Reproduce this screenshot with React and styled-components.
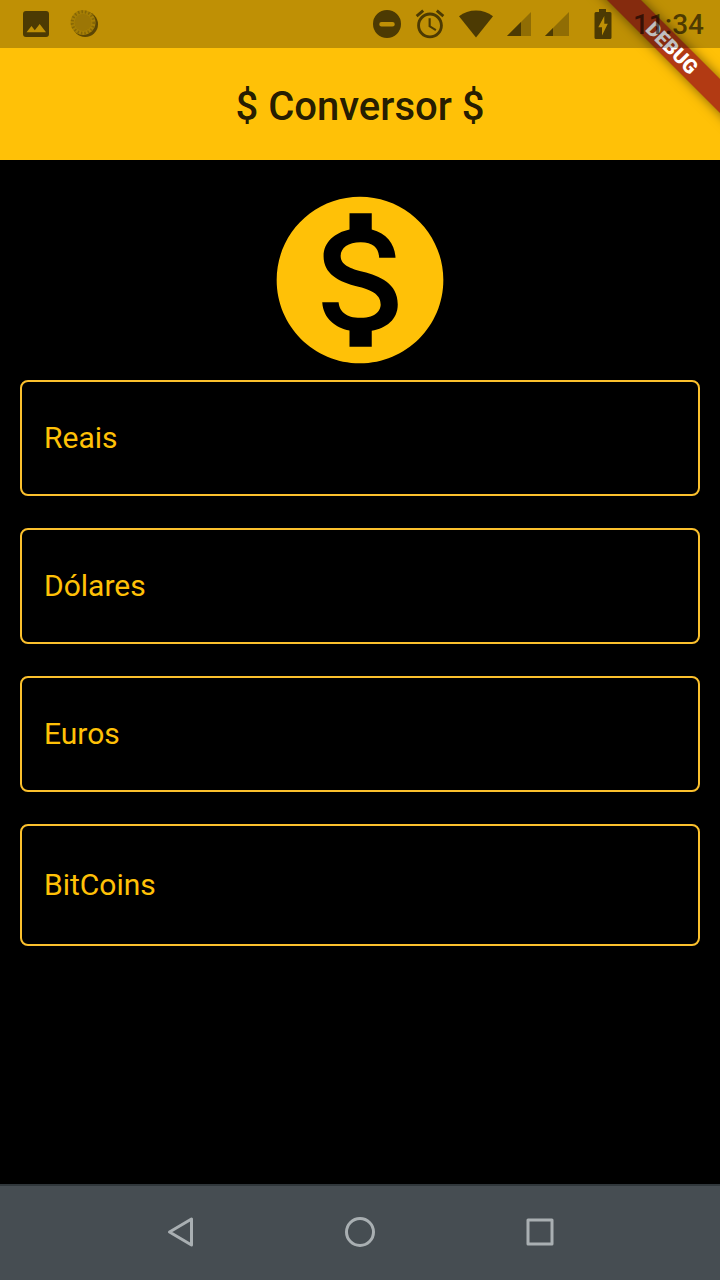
import React from "react";
import styled, { createGlobalStyle } from "styled-components";

const amber = "#ffc107";
const ink = "#4c3a03";

const GlobalStyle = createGlobalStyle`
  *, *::before, *::after { box-sizing: border-box; }
  body {
    margin: 0;
    background: #000;
    font-family: Roboto, "Liberation Sans", sans-serif;
  }
`;

const Screen = styled.div`
  display: flex;
  flex-direction: column;
  min-height: 100vh;
  background: #000;
`;

const Header = styled.header`
  position: relative;
  overflow: hidden;
  background: ${amber};
`;

const StatusBar = styled.div`
  position: relative;
  z-index: 2;
  display: flex;
  align-items: center;
  justify-content: space-between;
  height: 48px;
  padding: 0 16px 0 22px;
  background: rgba(0, 0, 0, 0.25);
  color: ${ink};
`;

const StatusGroup = styled.div`
  display: flex;
  align-items: center;
  gap: ${({ $gap }) => $gap}px;
`;

const StatusIcon = styled.svg`
  display: block;
  flex: none;
  fill: currentColor;
`;

const Clock = styled.time`
  padding-top: 2px;
  font-size: 28px;
  line-height: 32px;
  font-weight: 500;
  color: rgba(0, 0, 0, 0.6);
`;

const AppBar = styled.div`
  display: flex;
  align-items: center;
  justify-content: center;
  height: 112px;
  padding: 6px 32px 0;
`;

const Title = styled.h1`
  margin: 0;
  font-size: 40px;
  line-height: 48px;
  font-weight: 500;
  color: rgba(0, 0, 0, 0.87);
`;

const DebugRibbon = styled.div`
  position: absolute;
  z-index: 1;
  top: 36px;
  right: -52px;
  width: 200px;
  height: 24px;
  transform: rotate(45deg);
  background: #b23a13;
  box-shadow: 0 0 12px rgba(0, 0, 0, 0.5);
  color: #fff;
  font-size: 20px;
  line-height: 24px;
  font-weight: 900;
  text-align: center;
`;

const Content = styled.main`
  flex: 1;
  display: flex;
  flex-direction: column;
  padding: 20px;
`;

const CoinIcon = styled.svg`
  display: block;
  align-self: center;
  width: 200px;
  height: 200px;
  fill: ${amber};
`;

const Form = styled.form`
  display: flex;
  flex-direction: column;
  gap: 32px;
`;

const Field = styled.label`
  display: flex;
  align-items: center;
  gap: 16px;
  height: ${({ $tall }) => ($tall ? 122 : 116)}px;
  padding: 0 22px;
  border: 2px solid #fbc02d;
  border-radius: 8px;
  color: ${amber};
  cursor: text;
`;

const FieldName = styled.span`
  font-size: 30px;
  line-height: 36px;
`;

const FieldInput = styled.input`
  flex: 1;
  min-width: 0;
  padding: 0;
  border: 0;
  outline: 0;
  background: transparent;
  color: inherit;
  font: 30px/36px Roboto, "Liberation Sans", sans-serif;
`;

const NavBar = styled.nav`
  display: flex;
  justify-content: center;
  gap: 84px;
  height: 96px;
  border-top: 2px solid #30373b;
  background: #464d52;
`;

const NavButton = styled.button`
  display: flex;
  align-items: center;
  justify-content: center;
  width: 96px;
  padding: 0;
  border: 0;
  background: transparent;
  color: #a9afb2;
  cursor: pointer;
`;

const NavIcon = styled.svg`
  width: 36px;
  height: 36px;
  fill: none;
  stroke: currentColor;
  stroke-width: 3;
  stroke-linejoin: round;
`;

const PictureIcon = () => (
  <StatusIcon width="28" height="28" viewBox="0 0 28 28">
    <path
      fillRule="evenodd"
      d="M4 1h20a3 3 0 0 1 3 3v20a3 3 0 0 1-3 3H4a3 3 0 0 1-3-3V4a3 3 0 0 1 3-3zM4.500 22.300h19.500L17.700 14l-4.900 6.300-3.300-4.300z"
    />
  </StatusIcon>
);

const SealIcon = () => (
  <StatusIcon width="30" height="30" viewBox="0 0 30 30">
    <circle cx="15.200" cy="15.200" r="12.800" fill="#5c4604" />
    <circle cx="13" cy="13.500" r="12.500" fill="#a77f05" />
    <circle cx="13" cy="13.500" r="10.800" fill="none" stroke="#866706" strokeWidth="3" strokeDasharray="1.500 2" />
    <circle cx="13" cy="13.500" r="8.500" fill="#9c7605" />
  </StatusIcon>
);

const DoNotDisturbIcon = () => (
  <StatusIcon width="28" height="28" viewBox="0 0 28 28">
    <path
      fillRule="evenodd"
      d="M14 0a14 14 0 1 1 0 28a14 14 0 0 1 0-28zM8.500 12a2 2 0 0 0 0 4.500h11a2 2 0 0 0 0-4.500z"
    />
  </StatusIcon>
);

const AlarmIcon = () => (
  <StatusIcon width="30" height="30" viewBox="1.500 1.500 21 21">
    <path d="M22 5.720l-4.600-3.860-1.290 1.530 4.600 3.860L22 5.720zM7.880 3.390L6.600 1.860 2 5.710l1.290 1.530 4.590-3.850zM12.500 8H11v6l4.750 2.850.75-1.230-4-2.370V8zM12 4c-4.970 0-9 4.030-9 9s4.020 9 9 9c4.970 0 9-4.030 9-9s-4.030-9-9-9zm0 16c-3.870 0-7-3.130-7-7s3.130-7 7-7 7 3.130 7 7-3.130 7-7 7z" />
  </StatusIcon>
);

const WifiIcon = () => (
  <StatusIcon width="34" height="28" viewBox="0 0 34 28">
    <path d="M17 27.500L0 6.200C4.800 2.500 10.700.5 17 .5s12.200 2 17 5.700z" />
  </StatusIcon>
);

const SignalIcon = ({ level }) => (
  <StatusIcon width="24" height="24" viewBox="0 0 24 24">
    <path d="M0 24L24 0v24z" opacity="0.4" />
    <path d={`M0 24L${level} ${24 - level}V24z`} />
  </StatusIcon>
);

const BatteryIcon = () => (
  <StatusIcon width="22" height="30" viewBox="-4 0 22 30">
    <path
      fillRule="evenodd"
      d="M5 0h7v3h4a1.500 1.500 0 0 1 1.500 1.500v24A1.500 1.500 0 0 1 16 30H2a1.500 1.500 0 0 1-1.500-1.500v-24A1.500 1.500 0 0 1 2 3h3zM10.300 7L4.300 18.200h3.700v8.300l5.800-11.700h-3.500z"
    />
  </StatusIcon>
);

const fields = [
  { id: "reais", name: "Reais" },
  { id: "dolares", name: "Dólares" },
  { id: "euros", name: "Euros" },
  { id: "bitcoins", name: "BitCoins", tall: true },
];

export default function App() {
  return (
    <Screen>
      <GlobalStyle />
      <Header>
        <StatusBar>
          <StatusGroup $gap={20}>
            <PictureIcon />
            <SealIcon />
          </StatusGroup>
          <StatusGroup $gap={21}>
            <StatusGroup $gap={14}>
              <DoNotDisturbIcon />
              <AlarmIcon />
              <WifiIcon />
              <SignalIcon level={14} />
              <SignalIcon level={8} />
            </StatusGroup>
            <BatteryIcon />
            <Clock>11:34</Clock>
          </StatusGroup>
        </StatusBar>
        <AppBar>
          <Title>$ Conversor $</Title>
        </AppBar>
        <DebugRibbon>DEBUG</DebugRibbon>
      </Header>
      <Content>
        <CoinIcon viewBox="0 0 24 24" aria-hidden="true">
          <path d="M12 2C6.480 2 2 6.480 2 12s4.480 10 10 10 10-4.480 10-10S17.520 2 12 2zm1.410 16.090V20h-2.670v-1.930c-1.710-.36-3.160-1.460-3.270-3.400h1.960c.1 1.050.82 1.870 2.650 1.870 1.960 0 2.400-.98 2.400-1.590 0-.83-.44-1.610-2.670-2.140-2.480-.6-4.180-1.620-4.180-3.670 0-1.720 1.390-2.840 3.110-3.210V4h2.670v1.950c1.860.45 2.790 1.860 2.850 3.390H14.300c-.05-1.110-.64-1.870-2.220-1.870-1.500 0-2.400.68-2.400 1.640 0 .84.65 1.390 2.670 1.910s4.180 1.390 4.180 3.910c-.01 1.830-1.380 2.830-3.120 3.160z" />
        </CoinIcon>
        <Form>
          {fields.map(({ id, name, tall }) => (
            <Field key={id} htmlFor={id} $tall={tall}>
              <FieldName>{name}</FieldName>
              <FieldInput id={id} name={id} type="text" inputMode="decimal" />
            </Field>
          ))}
        </Form>
      </Content>
      <NavBar>
        <NavButton type="button" aria-label="Back">
          <NavIcon viewBox="0 0 36 36">
            <path d="M7.500 17L29.500 4v26z" />
          </NavIcon>
        </NavButton>
        <NavButton type="button" aria-label="Home">
          <NavIcon viewBox="0 0 36 36">
            <circle cx="18" cy="17" r="13.500" />
          </NavIcon>
        </NavButton>
        <NavButton type="button" aria-label="Recent apps">
          <NavIcon viewBox="0 0 36 36">
            <rect x="6" y="5" width="24" height="24" />
          </NavIcon>
        </NavButton>
      </NavBar>
    </Screen>
  );
}
